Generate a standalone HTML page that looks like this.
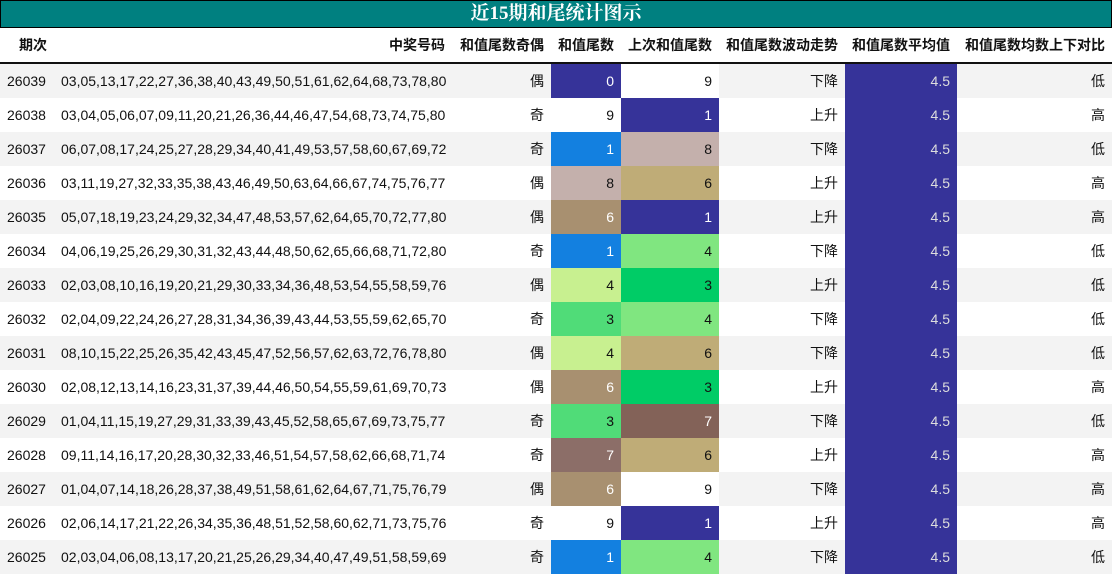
<!DOCTYPE html><html><head><meta charset="utf-8"><style>
body{margin:0;width:1112px;height:575px;overflow:hidden;background:#fff;font-family:"Liberation Sans","Noto Sans CJK SC",sans-serif;font-size:14px;color:#111}
.t{position:absolute;left:0;top:0;width:1110px;height:26px;background:#008080;border:1px solid #000;color:#fff;font:bold 19px "Liberation Serif","Noto Serif CJK SC",serif;text-align:center;line-height:26px}
table{position:absolute;left:0;top:28px;border-collapse:collapse;table-layout:fixed;width:1112px}
td,th{padding:0 7px;text-align:right;white-space:nowrap;height:34px}
th{font-weight:bold;height:34px;border-bottom:2px solid #111}
tr:nth-child(even) td{background:#f3f3f3}
td.a,th.a{text-align:left}
td.av{background:#363399!important;color:#ddd}
.w{color:#fff}
</style></head><body>
<div class="t">近15期和尾统计图示</div>
<table>
<colgroup><col style="width:55px"><col style="width:397px"><col style="width:99px"><col style="width:70px"><col style="width:98px"><col style="width:126px"><col style="width:112px"><col style="width:155px"></colgroup>
<tr><th class="a" style="padding-left:19px">期次</th><th>中奖号码</th><th>和值尾数奇偶</th><th>和值尾数</th><th>上次和值尾数</th><th>和值尾数波动走势</th><th>和值尾数平均值</th><th>和值尾数均数上下对比</th></tr>
<tr><td class="a">26039</td><td class="a" style="padding-left:6px">03,05,13,17,22,27,36,38,40,43,49,50,51,61,62,64,68,73,78,80</td><td>偶</td><td style="background:#363399" class="w">0</td><td style="background:#fff">9</td><td>下降</td><td class="av">4.5</td><td>低</td></tr>
<tr><td class="a">26038</td><td class="a" style="padding-left:6px">03,04,05,06,07,09,11,20,21,26,36,44,46,47,54,68,73,74,75,80</td><td>奇</td><td style="background:#fff">9</td><td style="background:#363399" class="w">1</td><td>上升</td><td class="av">4.5</td><td>高</td></tr>
<tr><td class="a">26037</td><td class="a" style="padding-left:6px">06,07,08,17,24,25,27,28,29,34,40,41,49,53,57,58,60,67,69,72</td><td>奇</td><td style="background:#1380e0" class="w">1</td><td style="background:#c4b0ac">8</td><td>下降</td><td class="av">4.5</td><td>低</td></tr>
<tr><td class="a">26036</td><td class="a" style="padding-left:6px">03,11,19,27,32,33,35,38,43,46,49,50,63,64,66,67,74,75,76,77</td><td>偶</td><td style="background:#c4b0ac">8</td><td style="background:#bfac77">6</td><td>上升</td><td class="av">4.5</td><td>高</td></tr>
<tr><td class="a">26035</td><td class="a" style="padding-left:6px">05,07,18,19,23,24,29,32,34,47,48,53,57,62,64,65,70,72,77,80</td><td>偶</td><td style="background:#a89070" class="w">6</td><td style="background:#363399" class="w">1</td><td>上升</td><td class="av">4.5</td><td>高</td></tr>
<tr><td class="a">26034</td><td class="a" style="padding-left:6px">04,06,19,25,26,29,30,31,32,43,44,48,50,62,65,66,68,71,72,80</td><td>奇</td><td style="background:#1380e0" class="w">1</td><td style="background:#80e680">4</td><td>下降</td><td class="av">4.5</td><td>低</td></tr>
<tr><td class="a">26033</td><td class="a" style="padding-left:6px">02,03,08,10,16,19,20,21,29,30,33,34,36,48,53,54,55,58,59,76</td><td>偶</td><td style="background:#c8f090">4</td><td style="background:#00cc66">3</td><td>上升</td><td class="av">4.5</td><td>低</td></tr>
<tr><td class="a">26032</td><td class="a" style="padding-left:6px">02,04,09,22,24,26,27,28,31,34,36,39,43,44,53,55,59,62,65,70</td><td>奇</td><td style="background:#50dc78">3</td><td style="background:#80e680">4</td><td>下降</td><td class="av">4.5</td><td>低</td></tr>
<tr><td class="a">26031</td><td class="a" style="padding-left:6px">08,10,15,22,25,26,35,42,43,45,47,52,56,57,62,63,72,76,78,80</td><td>偶</td><td style="background:#c8f090">4</td><td style="background:#bfac77">6</td><td>下降</td><td class="av">4.5</td><td>低</td></tr>
<tr><td class="a">26030</td><td class="a" style="padding-left:6px">02,08,12,13,14,16,23,31,37,39,44,46,50,54,55,59,61,69,70,73</td><td>偶</td><td style="background:#a89070" class="w">6</td><td style="background:#00cc66">3</td><td>上升</td><td class="av">4.5</td><td>高</td></tr>
<tr><td class="a">26029</td><td class="a" style="padding-left:6px">01,04,11,15,19,27,29,31,33,39,43,45,52,58,65,67,69,73,75,77</td><td>奇</td><td style="background:#50dc78">3</td><td style="background:#836258" class="w">7</td><td>下降</td><td class="av">4.5</td><td>低</td></tr>
<tr><td class="a">26028</td><td class="a" style="padding-left:6px">09,11,14,16,17,20,28,30,32,33,46,51,54,57,58,62,66,68,71,74</td><td>奇</td><td style="background:#8c6e68" class="w">7</td><td style="background:#bfac77">6</td><td>上升</td><td class="av">4.5</td><td>高</td></tr>
<tr><td class="a">26027</td><td class="a" style="padding-left:6px">01,04,07,14,18,26,28,37,38,49,51,58,61,62,64,67,71,75,76,79</td><td>偶</td><td style="background:#a89070" class="w">6</td><td style="background:#fff">9</td><td>下降</td><td class="av">4.5</td><td>高</td></tr>
<tr><td class="a">26026</td><td class="a" style="padding-left:6px">02,06,14,17,21,22,26,34,35,36,48,51,52,58,60,62,71,73,75,76</td><td>奇</td><td style="background:#fff">9</td><td style="background:#363399" class="w">1</td><td>上升</td><td class="av">4.5</td><td>高</td></tr>
<tr><td class="a">26025</td><td class="a" style="padding-left:6px">02,03,04,06,08,13,17,20,21,25,26,29,34,40,47,49,51,58,59,69</td><td>奇</td><td style="background:#1380e0" class="w">1</td><td style="background:#80e680">4</td><td>下降</td><td class="av">4.5</td><td>低</td></tr>
</table></body></html>
